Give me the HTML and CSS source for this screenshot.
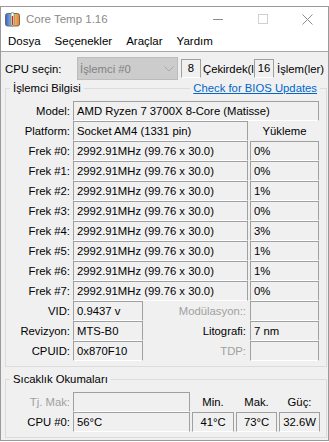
FILE: index.html
```html
<!DOCTYPE html>
<html>
<head>
<meta charset="utf-8">
<title>Core Temp 1.16</title>
<link rel="stylesheet" href="styles.css">
</head>
<body>
<div class="window">
    <div class="titlebar">
        <svg class="appicon" width="15" height="15" viewBox="0 0 15 15">
            <defs>
                <linearGradient id="ig" x1="0" x2="1" y1="0" y2="0">
                    <stop offset="0" stop-color="#2b63d0"/>
                    <stop offset="0.45" stop-color="#9fb7e0"/>
                    <stop offset="0.55" stop-color="#f3c08a"/>
                    <stop offset="1" stop-color="#ee7d1c"/>
                </linearGradient>
            </defs>
            <rect x="0.5" y="1.5" width="14" height="12.5" rx="2" fill="url(#ig)" stroke="#6a6a6a"/>
            <rect x="5.8" y="0.5" width="3.4" height="13.5" rx="1.7" fill="#f4f4f4" stroke="#5f8f4f" stroke-width="0.8"/>
            <line x1="7.5" y1="4" x2="7.5" y2="13" stroke="#d8221e" stroke-width="1.3"/>
        </svg>
        <span class="title">Core Temp 1.16</span>
        <div class="caption">
            <span class="capbtn"><svg width="10" height="10"><line x1="0" y1="5.5" x2="10" y2="5.5" stroke="#8c8c8c"/></svg></span>
            <span class="capbtn"><svg width="10" height="10"><rect x="0.5" y="0.5" width="9" height="9" fill="none" stroke="#d0d0d0"/></svg></span>
            <span class="capbtn"><svg width="11" height="11"><path d="M0.5 0.5 L10.5 10.5 M10.5 0.5 L0.5 10.5" stroke="#8c8c8c"/></svg></span>
        </div>
    </div>
    <div class="menubar">
        <span>Dosya</span><span>Seçenekler</span><span>Araçlar</span><span>Yardım</span>
    </div>
    <div class="client">
        <div class="cpu-row">
            <span class="cpu-lbl">CPU seçin:</span>
            <div class="combo">
                <span>İşlemci #0</span>
                <svg width="10" height="6"><polyline points="0.5,0.5 5,5 9.5,0.5" fill="none" stroke="#a9a9a9"/></svg>
            </div>
            <span class="box num">8</span>
            <span class="cut">Çekirdek(ler)</span>
            <span class="box num tight">16</span>
            <span class="after">İşlem(ler)</span>
        </div>

        <div class="group">
            <div class="group-head">
                <span class="legend">İşlemci Bilgisi</span>
                <a class="bios" href="#">Check for BIOS Updates</a>
            </div>
            <div class="grid info-grid">
                <span class="lbl">Model:</span><span class="box span3">AMD Ryzen 7 3700X 8-Core (Matisse)</span>
                <span class="lbl">Platform:</span><span class="box span2">Socket AM4 (1331 pin)</span><span class="colhead">Yükleme</span>
                <span class="lbl">Frek #0:</span><span class="box span2">2992.91MHz (99.76 x 30.0)</span><span class="box">0%</span>
                <span class="lbl">Frek #1:</span><span class="box span2">2992.91MHz (99.76 x 30.0)</span><span class="box">0%</span>
                <span class="lbl">Frek #2:</span><span class="box span2">2992.91MHz (99.76 x 30.0)</span><span class="box">1%</span>
                <span class="lbl">Frek #3:</span><span class="box span2">2992.91MHz (99.76 x 30.0)</span><span class="box">0%</span>
                <span class="lbl">Frek #4:</span><span class="box span2">2992.91MHz (99.76 x 30.0)</span><span class="box">3%</span>
                <span class="lbl">Frek #5:</span><span class="box span2">2992.91MHz (99.76 x 30.0)</span><span class="box">1%</span>
                <span class="lbl">Frek #6:</span><span class="box span2">2992.91MHz (99.76 x 30.0)</span><span class="box">1%</span>
                <span class="lbl">Frek #7:</span><span class="box span2">2992.91MHz (99.76 x 30.0)</span><span class="box">0%</span>
                <span class="lbl">VID:</span><span class="box">0.9437 v</span><span class="lbl mid dim">Modülasyon::</span><span class="box"></span>
                <span class="lbl">Revizyon:</span><span class="box">MTS-B0</span><span class="lbl mid">Litografi:</span><span class="box">7 nm</span>
                <span class="lbl">CPUID:</span><span class="box">0x870F10</span><span class="lbl mid dim">TDP:</span><span class="box"></span>
            </div>
        </div>

        <div class="group temps">
            <div class="group-head">
                <span class="legend">Sıcaklık Okumaları</span>
            </div>
            <div class="grid temp-grid">
                <span class="lbl dim">Tj. Mak:</span><span class="box"></span><span class="colhead">Min.</span><span class="colhead">Mak.</span><span class="colhead">Güç:</span>
                <span class="lbl">CPU #0:</span><span class="box">56°C</span><span class="box center">41°C</span><span class="box center">73°C</span><span class="box center">32.6W</span>
            </div>
        </div>
    </div>
</div>
</body>
</html>
```

FILE: styles.css
```css
body
{
margin: 0;
background: #fff;
font-family: "Liberation Sans", Arial, sans-serif;
font-size: 11.3px;
color: #000;
}
.window
{
margin-top: 6px;
width: 327px;
border: 1px solid #9a9a9a;
background: #f0f0f0;
overflow: hidden;
}
.titlebar
{
display: flex;
align-items: center;
height: 24px;
padding-left: 4px;
background: #fff;
}
.appicon
{
margin-right: 6px;
}
.title
{
flex: 1;
font-size: 11.5px;
color: #8a8a8a;
}
.caption
{
display: flex;
margin-right: -2px;
}
.capbtn
{
display: flex;
align-items: center;
justify-content: center;
width: 45px;
height: 24px;
}
.menubar
{
display: flex;
align-items: center;
height: 20px;
background: #fff;
border-bottom: 1px solid #a8a8a8;
font-size: 11.5px;
}
.menubar span
{
padding: 0 7px;
}
.client
{
padding: 5px 0 2px 0;
}
.cpu-row
{
display: flex;
align-items: center;
height: 23px;
padding-left: 4px;
white-space: nowrap;
}
.cpu-lbl
{
width: 72px;
}
.combo
{
display: flex;
align-items: center;
justify-content: space-between;
box-sizing: border-box;
width: 101px;
height: 23px;
padding: 0 3px 0 2px;
border: 1px solid #bcbcbc;
background: #cccccc;
color: #838383;
}
.box
{
box-sizing: border-box;
height: 20px;
line-height: 18px;
padding: 0 3px;
border: 1px solid #a0a0a0;
border-bottom-color: #fff;
white-space: nowrap;
overflow: hidden;
}
.num
{
width: 20px;
height: 19px;
line-height: 17px;
margin-left: 3px;
padding: 0;
text-align: center;
}
.num.tight
{
margin-left: 0;
}
.cut
{
width: 51px;
margin-left: 2px;
overflow: hidden;
}
.after
{
margin-left: 3px;
}
.group
{
box-sizing: border-box;
width: 322px;
margin: 8px 0 0 4px;
padding: 0 6px 5px 0;
border: 1px solid #dcdcdc;
}
.group.temps
{
margin-top: 12px;
}
.group-head
{
display: flex;
justify-content: space-between;
height: 13px;
line-height: 13px;
margin-top: -7px;
}
.legend
{
margin-left: 4px;
padding: 0 3px;
background: #f0f0f0;
}
.bios
{
padding: 0 3px;
background: #f0f0f0;
color: #0066cc;
text-decoration: underline;
}
.grid
{
display: grid;
grid-auto-rows: 20px;
column-gap: 2px;
margin-top: 6px;
}
.info-grid
{
grid-template-columns: 65px 70px 103px 69px;
}
.temp-grid
{
grid-template-columns: 65px 117px 42px 41px 41px;
}
.lbl
{
line-height: 20px;
padding-right: 1px;
text-align: right;
white-space: nowrap;
}
.lbl.mid
{
padding-right: 2px;
}
.dim
{
color: #a0a0a0;
}
.span2
{
grid-column: span 2;
}
.span3
{
grid-column: span 3;
}
.colhead
{
line-height: 20px;
text-align: center;
}
.center
{
text-align: center;
}
```
